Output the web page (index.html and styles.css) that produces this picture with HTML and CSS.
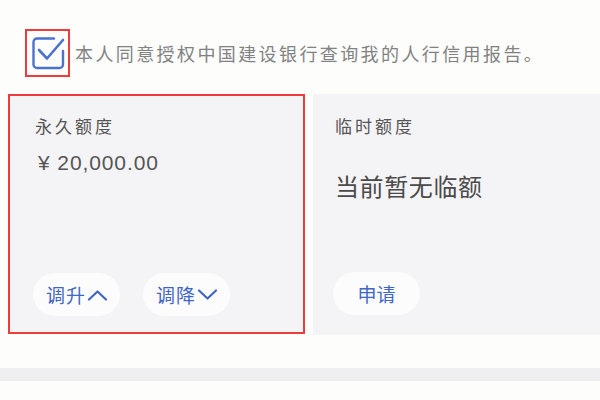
FILE: index.html
```html
<!DOCTYPE html>
<html lang="zh-CN">
<head>
<meta charset="utf-8">
<link rel="stylesheet" href="styles.css">
</head>
<body>
<div class="page">
  <div class="agree">
    <div class="check-box">
      <svg class="check-icon" width="33" height="33" viewBox="0 0 33 33">
        <path d="M22 1.5 H5 A3.5 3.5 0 0 0 1.5 5 V27.5 A3.5 3.5 0 0 0 5 31 H27.5 A3.5 3.5 0 0 0 31 27.5 V14" fill="none" stroke="#4a72cf" stroke-width="2.4" stroke-linecap="round"/>
        <path d="M7 13 L15 21.5 L31 3" fill="none" stroke="#4a72cf" stroke-width="2.6" stroke-linecap="round" stroke-linejoin="round"/>
      </svg>
    </div>
    <span class="agree-text">本人同意授权中国建设银行查询我的人行信用报告。</span>
  </div>
  <div class="cards">
    <div class="card card-left">
      <div class="card-title">永久额度</div>
      <div class="amount">¥ 20,000.00</div>
      <div class="actions">
        <div class="pill">调升<svg class="chev" width="21" height="12" viewBox="0 0 21 12"><path d="M2 10.5 L10.5 2.5 L19 10.5" fill="none" stroke="#3f66c6" stroke-width="2.2" stroke-linecap="round" stroke-linejoin="round"/></svg></div>
        <div class="pill">调降<svg class="chev" width="21" height="12" viewBox="0 0 21 12"><path d="M2 1.5 L10.5 9.5 L19 1.5" fill="none" stroke="#3f66c6" stroke-width="2.2" stroke-linecap="round" stroke-linejoin="round"/></svg></div>
      </div>
    </div>
    <div class="card card-right">
      <div class="card-title">临时额度</div>
      <div class="none-text">当前暂无临额</div>
      <div class="actions">
        <div class="pill pill-apply">申请</div>
      </div>
    </div>
  </div>
  <div class="band"></div>
</div>
</body>
</html>
```
FILE: styles.css
```css
html, body {
  margin: 0;
  padding: 0;
  background: #fdfdfc;
}
body {
  width: 600px;
  height: 400px;
  overflow: hidden;
  font-family: "Noto Sans CJK SC", "Noto Sans", sans-serif;
}
.page {
  padding-top: 29px;
}
.agree {
  display: flex;
  align-items: center;
  margin-left: 25px;
}
.check-box {
  width: 41px;
  height: 44px;
  border: 2px solid #ee3b3b;
  display: flex;
  align-items: center;
  justify-content: center;
}
.check-icon {
  display: block;
  margin-left: 1px;
  margin-top: 1px;
}
.agree-text {
  margin-left: 5px;
  font-size: 18px;
  letter-spacing: 2.4px;
  line-height: 20px;
  color: #828282;
}
.cards {
  display: flex;
  gap: 8px;
  margin-top: 17px;
  padding-left: 8px;
}
.card {
  background: #f4f4f6;
  height: 241px;
  box-sizing: border-box;
  display: flex;
  flex-direction: column;
}
.card-left {
  width: 297px;
  border: 2px solid #ee3b3b;
  padding: 21px 0 16px 25px;
  height: 240px;
}
.card-right {
  flex: 1;
  padding: 23px 0 20px 22px;
}
.card-title {
  font-size: 17px;
  line-height: 17px;
  letter-spacing: 3px;
  color: #555;
}
.amount {
  margin-top: 18px;
  margin-left: 3px;
  font-family: "Liberation Sans", Arial, sans-serif;
  font-size: 21px;
  line-height: 21px;
  letter-spacing: 0.9px;
  color: #555;
}
.none-text {
  margin-top: 40px;
  font-size: 24px;
  line-height: 24px;
  letter-spacing: 0.6px;
  color: #4a4a4a;
}
.actions {
  margin-top: auto;
  display: flex;
  gap: 23px;
  margin-left: -2px;
}
.pill {
  height: 43px;
  border-radius: 22px;
  background: #fcfcfd;
  display: flex;
  align-items: center;
  padding: 0 12px 0 13px;
  font-size: 19px;
  letter-spacing: 1px;
  color: #3f66c6;
}
.pill-apply {
  width: 87px;
  box-sizing: border-box;
  justify-content: center;
  padding: 0;
  letter-spacing: 0;
}
.chev {
  display: block;
  margin-left: 1px;
}
.band {
  margin-top: 33px;
  height: 13px;
  background: #efeff1;
}
```
